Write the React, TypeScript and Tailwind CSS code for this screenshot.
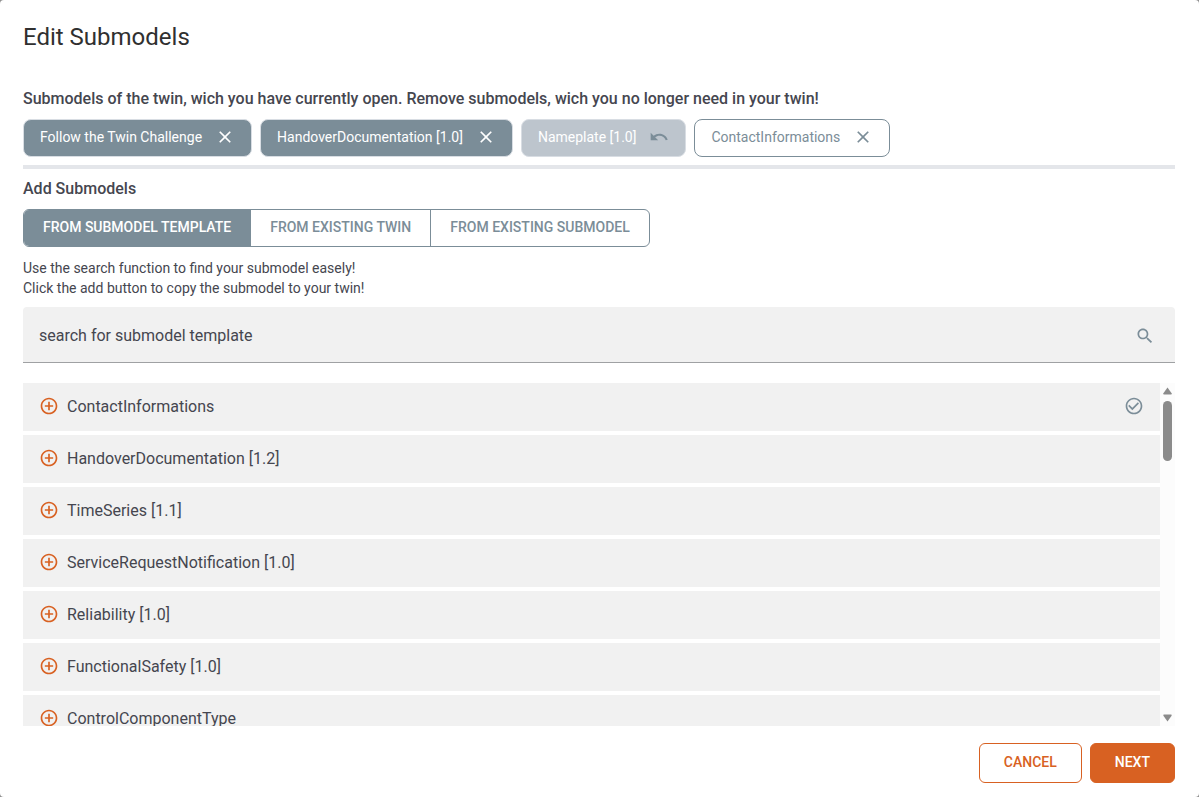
import type { ReactNode } from "react";

type ChipState = "kept" | "deleted" | "added";

interface SubmodelChip {
    name: string;
    state: ChipState;
}

interface SubmodelTemplate {
    name: string;
    selected?: boolean;
}

const chips: SubmodelChip[] = [
    { name: "Follow the Twin Challenge", state: "kept" },
    { name: "HandoverDocumentation [1.0]", state: "kept" },
    { name: "Nameplate [1.0]", state: "deleted" },
    { name: "ContactInformations", state: "added" },
];

const sources = [
    "From Submodel Template",
    "From Existing Twin",
    "From Existing Submodel",
];

const templates: SubmodelTemplate[] = [
    { name: "ContactInformations", selected: true },
    { name: "HandoverDocumentation [1.2]" },
    { name: "TimeSeries [1.1]" },
    { name: "ServiceRequestNotification [1.0]" },
    { name: "Reliability [1.0]" },
    { name: "FunctionalSafety [1.0]" },
    { name: "ControlComponentType" },
];

const chipStyles: Record<ChipState, string> = {
    kept: "border-[#d8dde3] bg-[#7b8d98] text-white",
    deleted: "border-[#d8dde3] bg-[#bdc5cd] text-white",
    added: "border-[#7b8d98] bg-white text-[#7b8d98]",
};

const iconPaths = {
    close: "M19 6.41 17.59 5 12 10.59 6.41 5 5 6.41 10.59 12 5 17.59 6.41 19 12 13.41 17.59 19 19 17.59 13.41 12z",
    undo: "M12.5 8c-2.65 0-5.05.99-6.9 2.6L2 7v9h9l-3.62-3.62c1.39-1.16 3.16-1.88 5.12-1.88 3.54 0 6.55 2.31 7.6 5.5l2.37-.78C21.08 11.03 17.15 8 12.5 8z",
    search: "M15.5 14h-.79l-.28-.27C15.41 12.59 16 11.11 16 9.5 16 5.91 13.09 3 9.5 3S3 5.91 3 9.5 5.91 16 9.5 16c1.61 0 3.09-.59 4.23-1.57l.27.28v.79l5 4.99L20.49 19l-4.99-5zm-6 0C7.01 14 5 11.99 5 9.5S7.01 5 9.5 5 14 7.01 14 9.5 11.99 14 9.5 14z",
    add: "M13 7h-2v4H7v2h4v4h2v-4h4v-2h-4V7zm-1-5C6.48 2 2 6.48 2 12s4.48 10 10 10 10-4.48 10-10S17.52 2 12 2zm0 18c-4.41 0-8-3.59-8-8s3.59-8 8-8 8 3.59 8 8-3.59 8-8 8z",
    check: "M16.59 7.58 10 14.17l-3.59-3.58L5 12l5 5 8-8-1.41-1.42zM12 2C6.48 2 2 6.48 2 12s4.48 10 10 10 10-4.48 10-10S17.52 2 12 2zm0 18c-4.41 0-8-3.59-8-8s3.59-8 8-8 8 3.59 8 8-3.59 8-8 8z",
};

function Icon({ name, className }: { name: keyof typeof iconPaths; className?: string }) {
    return (
        <svg
            viewBox="0 0 24 24"
            aria-hidden="true"
            className={`size-5 shrink-0 fill-current ${className ?? ""}`}
        >
            <path d={iconPaths[name]} />
        </svg>
    );
}

function SectionTitle({ children }: { children: ReactNode }) {
    return (
        <h2 className="text-base font-medium text-[#45464f]">{children}</h2>
    );
}

function Chip({ chip }: { chip: SubmodelChip }) {
    const deleted = chip.state === "deleted";
    return (
        <button
            type="button"
            className={`flex h-[38px] items-center gap-[13px] rounded-lg border px-4 pb-0.5 text-sm ${chipStyles[chip.state]}`}
        >
            {chip.name}
            <Icon
                name={deleted ? "undo" : "close"}
                className={deleted ? "text-[#7b8d98]" : ""}
            />
        </button>
    );
}

function TemplateRow({ template }: { template: SubmodelTemplate }) {
    return (
        <li>
            <button
                type="button"
                className="flex h-12 w-full items-center gap-2 bg-[#f1f1f1] px-4 text-left text-base text-[#45464f]"
            >
                <Icon name="add" className="mb-0.5 text-[#d86122]" />
                <span className="grow">{template.name}</span>
                {template.selected && (
                    <Icon name="check" className="mb-0.5 text-[#7b8d98]" />
                )}
            </button>
        </li>
    );
}

function ScrollRail() {
    return (
        <div
            aria-hidden="true"
            className="flex w-[15px] flex-col items-center bg-[#fcfcfc] py-1 text-[#8b8b8b]"
        >
            <svg viewBox="0 0 9 8" className="h-2 w-[9px] fill-current">
                <path d="M4.5 0.5 8.6 6.2Q9 7.6 8 7.6H1Q0 7.6 .4 6.2z" />
            </svg>
            <div className="mt-1.5 h-15 w-[9px] rounded-full bg-current" />
            <svg viewBox="0 0 9 8" className="mt-auto h-2 w-[9px] fill-current">
                <path d="M4.5 7.5 .4 1.8Q0 .4 1 .4H8Q9 .4 8.6 1.8z" />
            </svg>
        </div>
    );
}

export default function App() {
    return (
        <div className="h-screen bg-[#8f8f8f] font-[Roboto,sans-serif]">
            <main
                role="dialog"
                aria-labelledby="dialog-title"
                className="flex h-full flex-col rounded bg-white pt-[21px] pr-6 pb-[14px] pl-[23px]"
            >
                <h1 id="dialog-title" className="text-2xl text-[#303030]">
                    Edit Submodels
                </h1>

                <section className="mt-[34px]">
                    <SectionTitle>
                        Submodels of the twin, wich you have currently open.
                        Remove submodels, wich you no longer need in your twin!
                    </SectionTitle>
                    <div className="mt-2 flex flex-wrap gap-2">
                        {chips.map((chip) => (
                            <Chip key={chip.name} chip={chip} />
                        ))}
                    </div>
                </section>

                <hr className="mt-2 border-t-4 border-[#e4e6ea]" />

                <section className="mt-2 flex min-h-0 grow flex-col">
                    <SectionTitle>Add Submodels</SectionTitle>
                    <div className="mt-2 flex self-start overflow-hidden rounded-md border border-[#7b8d98]">
                        {sources.map((source, i) => (
                            <button
                                key={source}
                                type="button"
                                aria-pressed={i === 0}
                                className="h-9 border-l border-[#7b8d98] px-[19px] pb-0.5 text-sm font-medium text-[#7b8d98] uppercase first:border-l-0 aria-pressed:bg-[#7b8d98] aria-pressed:text-white"
                            >
                                {source}
                            </button>
                        ))}
                    </div>
                    <p className="mt-[11px] text-sm text-[#45464f]">
                        Use the search function to find your submodel easely!
                        <br />
                        Click the add button to copy the submodel to your twin!
                    </p>

                    <label className="mt-[9px] flex h-14 shrink-0 items-center rounded-t border-b border-[#9fa1a3] bg-[#f1f1f1] pt-[3px] pr-5 pl-4">
                        <input
                            type="text"
                            aria-label="search for submodel template"
                            placeholder="search for submodel template"
                            className="grow text-base text-[#45464f] outline-none placeholder:text-[#45464f]"
                        />
                        <Icon name="search" className="text-[#7b8d98]" />
                    </label>

                    <div className="mt-5 flex min-h-0 grow basis-0">
                        <ul className="flex grow flex-col gap-1 overflow-y-auto [scrollbar-width:none]">
                            {templates.map((template) => (
                                <TemplateRow
                                    key={template.name}
                                    template={template}
                                />
                            ))}
                        </ul>
                        <ScrollRail />
                    </div>
                </section>

                <footer className="mt-[17px] flex justify-end gap-2">
                    <button
                        type="button"
                        className="h-10 rounded-md border border-[#d86122] px-6 pb-0.5 text-sm font-medium text-[#d86122] uppercase"
                    >
                        Cancel
                    </button>
                    <button
                        type="button"
                        className="h-10 rounded-md border border-[#d86122] bg-[#d86122] px-6 pb-0.5 text-sm font-medium text-white uppercase"
                    >
                        Next
                    </button>
                </footer>
            </main>
        </div>
    );
}
